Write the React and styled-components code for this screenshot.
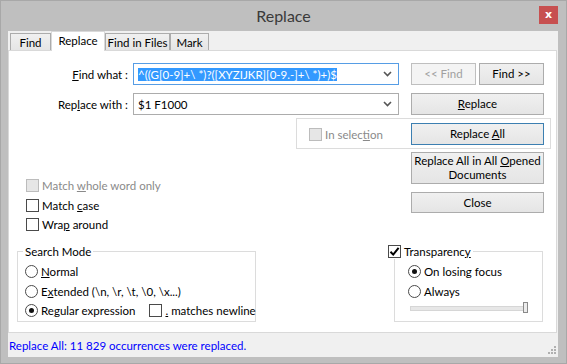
import React from 'react';
import styled, { createGlobalStyle } from 'styled-components';

const GlobalStyle = createGlobalStyle`
  html, body {
    margin: 0;
    padding: 0;
    background: #bfbfbf;
  }
  body {
    font-family: Lato, "Noto Sans", sans-serif;
    font-size: 11.5px;
    color: #000;
  }
`;

const Window = styled.div`
  width: 567px;
  height: 364px;
  box-sizing: border-box;
  background: #bfbfbf;
  border: 1px solid #a8a8a8;
  display: flex;
  flex-direction: column;
`;

const TitleBar = styled.div`
  height: 30px;
  display: grid;
  grid-template-columns: 1fr auto 1fr;
  align-items: center;
`;

const Title = styled.div`
  grid-column: 2;
  font-size: 16px;
  color: #3a3a3a;
  margin-top: -1px;
`;

const CloseButton = styled.div`
  grid-column: 3;
  justify-self: end;
  align-self: start;
  margin: 5px 8px 0 0;
  width: 19px;
  height: 18px;
  background: #c75050;
  color: #fff;
  font-family: "DejaVu Sans", sans-serif;
  font-weight: bold;
  font-size: 11px;
  line-height: 17px;
  text-align: center;
`;

const Client = styled.div`
  margin: 0 8px 0 7px;
  height: 326px;
  background: #f0f0f0;
  display: flex;
  flex-direction: column;
`;

const TabStrip = styled.div`
  height: 19px;
  display: flex;
  align-items: flex-end;
  padding-left: 2px;
`;

const Tab = styled.div`
  box-sizing: border-box;
  width: ${p => p.$w}px;
  height: ${p => (p.$active ? 20 : 17)}px;
  margin-bottom: ${p => (p.$active ? -1 : 0)}px;
  position: relative;
  z-index: ${p => (p.$active ? 2 : 1)};
  border: 1px solid ${p => (p.$active ? '#d9d9d9' : '#acacac')};
  border-bottom: ${p => (p.$active ? 'none' : '0')};
  background: ${p => (p.$active ? '#fff' : 'linear-gradient(#f0f0f0, #e5e5e5)')};
  display: flex;
  align-items: center;
  justify-content: center;
  padding-bottom: ${p => (p.$active ? 2 : 0)}px;
  white-space: nowrap;
`;

const Panel = styled.div`
  box-sizing: border-box;
  width: 549px;
  height: 283px;
  border: 1px solid #d9d9d9;
  background: #fff;
  display: flex;
  flex-direction: column;
`;

const FieldRow = styled.div`
  display: flex;
  align-items: center;
  height: 22px;
  margin-top: ${p => p.$top}px;
`;

const FieldLabel = styled.div`
  box-sizing: border-box;
  width: 124px;
  padding-right: 5px;
  text-align: right;
`;

const Combo = styled.div`
  box-sizing: border-box;
  width: 266px;
  height: 22px;
  border: 1px solid ${p => (p.$focused ? '#569de5' : '#acacac')};
  background: #fff;
  display: flex;
  align-items: center;
  padding: 0 6px 0 4px;
  margin-right: 12px;
`;

const ComboText = styled.div`
  flex: 1;
  white-space: nowrap;
  overflow: hidden;
`;

const Selected = styled.span`
  background: #3399ff;
  color: #fff;
  padding: 1px 0 2px;
`;

const ButtonPair = styled.div`
  display: flex;
  gap: 3px;
`;

const Button = styled.div`
  box-sizing: border-box;
  width: ${p => p.$w || 133}px;
  height: ${p => p.$h || 22}px;
  border: 1px solid ${p => (p.$focused ? '#3c7fb1' : p.$disabled ? '#bfbfbf' : '#acacac')};
  background: ${p => (p.$disabled ? '#f4f4f4' : 'linear-gradient(#f0f0f0, #e5e5e5)')};
  color: ${p => (p.$disabled ? '#a0a0a0' : '#000')};
  display: flex;
  align-items: center;
  justify-content: center;
  text-align: center;
  line-height: 14px;
  padding: 0 2px;
`;

const SelectionRow = styled.div`
  display: flex;
  margin-top: 3px;
  padding-left: 287px;
`;

const SelectionGroup = styled.div`
  box-sizing: border-box;
  width: 255px;
  height: 31px;
  border: 1px solid #dcdcdc;
  display: flex;
  justify-content: space-between;
  align-items: flex-start;
  padding: 4px 6px 0 12px;
`;

const MiddleRow = styled.div`
  display: flex;
  height: 99px;
  margin-top: 3px;
`;

const OptionList = styled.div`
  width: 402px;
  box-sizing: border-box;
  padding: 24px 0 0 17px;
  display: flex;
  flex-direction: column;
`;

const ButtonColumn = styled.div`
  display: flex;
  flex-direction: column;
  gap: 8px;
`;

const OptionRow = styled.div`
  display: flex;
  align-items: center;
  gap: 3px;
  height: ${p => p.$h || 19.5}px;
  color: ${p => (p.$disabled ? '#8a8a8a' : '#000')};
  white-space: nowrap;
`;

const CheckBox = styled.span`
  box-sizing: border-box;
  width: 13px;
  height: 13px;
  flex: none;
  border: 1px solid ${p => (p.$disabled ? '#bcbcbc' : '#4a4a4a')};
  background: ${p => (p.$disabled ? '#e6e6e6' : '#fff')};
  display: flex;
  align-items: center;
  justify-content: center;
`;

const RadioDot = styled.span`
  box-sizing: border-box;
  width: 13px;
  height: 13px;
  flex: none;
  border-radius: 50%;
  border: 1px solid #4a4a4a;
  background: #fff;
  display: flex;
  align-items: center;
  justify-content: center;

  &::after {
    content: '';
    width: 5px;
    height: 5px;
    border-radius: 50%;
    background: #111;
    display: ${p => (p.$checked ? 'block' : 'none')};
  }
`;

const GroupRow = styled.div`
  display: flex;
  gap: 138px;
  padding-left: 8px;
`;

const GroupBox = styled.div`
  position: relative;
  box-sizing: border-box;
  width: ${p => p.$w}px;
  height: 71px;
  border: 1px solid #dcdcdc;
  padding: 10px 0 0 ${p => p.$pl}px;
  display: flex;
  flex-direction: column;
`;

const Caption = styled.div`
  position: absolute;
  left: ${p => p.$left}px;
  top: -9px;
  height: 16px;
  padding: 0 2px;
  background: #fff;
  display: flex;
  align-items: center;
  gap: 3px;
`;

const Inline = styled.div`
  display: flex;
  align-items: center;
  gap: 14px;
`;

const Track = styled.div`
  position: relative;
  box-sizing: border-box;
  width: 117px;
  height: 5px;
  margin: 5px 0 0 2px;
  border: 1px solid #d6d6d6;
  background: #e7e7e7;
`;

const Thumb = styled.span`
  position: absolute;
  left: 112px;
  top: -5px;
  box-sizing: border-box;
  width: 5px;
  height: 11px;
  border: 1px solid #8a8a8a;
  background: #ececec;
`;

const StatusBar = styled.div`
  flex: 1;
  display: flex;
  justify-content: space-between;
  align-items: center;
  padding: 0 2px 0 1px;
  color: #0000ff;
`;

const Grip = styled.svg`
  align-self: flex-end;
  margin-bottom: 3px;
`;

const Check = ({ checked, disabled }) => (
  <CheckBox $disabled={disabled}>
    {checked && (
      <svg width="11" height="11" viewBox="0 0 11 11">
        <path d="M1.5 5.8 L4.2 8.6 L9.6 1.8" fill="none" stroke="#000" strokeWidth="2" />
      </svg>
    )}
  </CheckBox>
);

const Option = ({ radio, checked, disabled, children }) => (
  <OptionRow $disabled={disabled}>
    {radio ? <RadioDot $checked={checked} /> : <Check checked={checked} disabled={disabled} />}
    <span>{children}</span>
  </OptionRow>
);

const Chevron = () => (
  <svg width="9" height="6" viewBox="0 0 9 6">
    <path d="M1 1 L4.5 4.5 L8 1" fill="none" stroke="#555" strokeWidth="1.6" />
  </svg>
);

export default function App() {
  return (
    <>
      <GlobalStyle />
      <Window>
        <TitleBar>
          <Title>Replace</Title>
          <CloseButton>x</CloseButton>
        </TitleBar>
        <Client>
          <TabStrip>
            <Tab $w={41}>Find</Tab>
            <Tab $w={54} $active>Replace</Tab>
            <Tab $w={65}>Find in Files</Tab>
            <Tab $w={39}>Mark</Tab>
          </TabStrip>
          <Panel>
            <FieldRow $top={12}>
              <FieldLabel><u>F</u>ind what :</FieldLabel>
              <Combo $focused>
                <ComboText>
                  <Selected>^((G[0-9]+\ *)?([XYZIJKR][0-9.-]+\ *)+)$</Selected>
                </ComboText>
                <Chevron />
              </Combo>
              <ButtonPair>
                <Button $w={65} $disabled><span>&lt;&lt; Find</span></Button>
                <Button $w={65}><span>Find &gt;&gt;</span></Button>
              </ButtonPair>
            </FieldRow>
            <FieldRow $top={8}>
              <FieldLabel>Rep<u>l</u>ace with :</FieldLabel>
              <Combo>
                <ComboText>$1 F1000</ComboText>
                <Chevron />
              </Combo>
              <Button><span><u>R</u>eplace</span></Button>
            </FieldRow>
            <SelectionRow>
              <SelectionGroup>
                <OptionRow $disabled $h={22}>
                  <Check disabled />
                  <span>In selec<u>t</u>ion</span>
                </OptionRow>
                <Button $focused><span>Replace <u>A</u>ll</span></Button>
              </SelectionGroup>
            </SelectionRow>
            <MiddleRow>
              <OptionList>
                <Option disabled>Match <u>w</u>hole word only</Option>
                <Option>Match <u>c</u>ase</Option>
                <Option>Wra<u>p</u> around</Option>
              </OptionList>
              <ButtonColumn>
                <Button $h={32}><span>Replace All in All <u>O</u>pened<br />Documents</span></Button>
                <Button $h={21}><span>Close</span></Button>
              </ButtonColumn>
            </MiddleRow>
            <GroupRow>
              <GroupBox $w={239} $pl={7}>
                <Caption $left={5}>Search Mode</Caption>
                <Option radio><u>N</u>ormal</Option>
                <Option radio>E<u>x</u>tended (\n, \r, \t, \0, \x...)</Option>
                <Inline>
                  <Option radio checked>Re<u>g</u>ular expression</Option>
                  <Option><u>.</u> matches newline</Option>
                </Inline>
              </GroupBox>
              <GroupBox $w={149} $pl={13}>
                <Caption $left={-9}>
                  <Check checked />
                  <span>Transparenc<u>y</u></span>
                </Caption>
                <Option radio checked>On losing focus</Option>
                <Option radio>Always</Option>
                <Track>
                  <Thumb />
                </Track>
              </GroupBox>
            </GroupRow>
          </Panel>
          <StatusBar>
            <span>Replace All: 11 829 occurrences were replaced.</span>
            <Grip width="8" height="8" viewBox="0 0 8 8">
              <g fill="#b0b0b0">
                <rect x="6" y="0" width="2" height="2" />
                <rect x="3" y="3" width="2" height="2" />
                <rect x="6" y="3" width="2" height="2" />
                <rect x="0" y="6" width="2" height="2" />
                <rect x="3" y="6" width="2" height="2" />
                <rect x="6" y="6" width="2" height="2" />
              </g>
            </Grip>
          </StatusBar>
        </Client>
      </Window>
    </>
  );
}
